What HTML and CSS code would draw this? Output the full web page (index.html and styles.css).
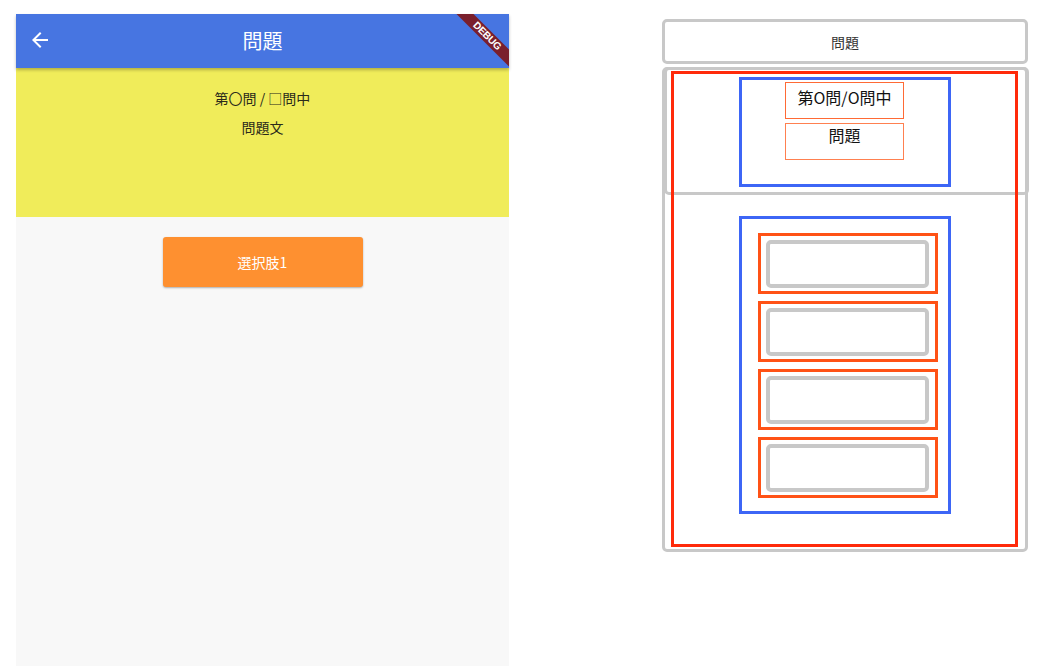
FILE: index.html
```html
<!DOCTYPE html>
<html lang="ja">
<head>
<meta charset="utf-8">
<title>問題</title>
<link rel="stylesheet" href="styles.css">
</head>
<body>
<div class="page">
  <div class="phone">
    <div class="appbar">
      <svg class="back" width="24" height="24" viewBox="0 0 24 24"><path d="M20 11H7.83l5.59-5.59L12 4l-8 8 8 8 1.41-1.41L7.83 13H20v-2z" fill="#fff"/></svg>
      <div class="title">問題</div>
      <div class="debug"><span>DEBUG</span></div>
    </div>
    <div class="question">
      <div class="qline">第〇問 / □問中</div>
      <div class="qline">問題文</div>
    </div>
    <div class="choices">
      <div class="choice">選択肢1</div>
    </div>
  </div>

  <div class="diagram">
    <div class="d-header">問題</div>
    <div class="d-body">
      <div class="d-overlay"></div>
      <div class="d-red">
        <div class="d-blue d-blue-top">
          <div class="d-small d-small-1">第O問/O問中</div>
          <div class="d-small d-small-2">問題</div>
        </div>
        <div class="d-blue d-blue-list">
          <div class="d-item"><div class="d-btn"></div></div>
          <div class="d-item"><div class="d-btn"></div></div>
          <div class="d-item"><div class="d-btn"></div></div>
          <div class="d-item"><div class="d-btn"></div></div>
        </div>
      </div>
    </div>
  </div>
</div>
</body>
</html>
```
FILE: styles.css
```css
html, body {
  margin: 0;
  padding: 0;
  background: #ffffff;
  font-family: "Noto Sans CJK JP", "Noto Sans", Roboto, sans-serif;
}
.page {
  display: flex;
  align-items: flex-start;
  padding: 14px 0 0 16px;
  height: 652px;
  overflow: hidden;
}
.phone {
  width: 493px;
  height: 652px;
  background: #f8f8f8;
  display: flex;
  flex-direction: column;
  flex-shrink: 0;
}
.appbar {
  position: relative;
  height: 54px;
  background: #4775e1;
  display: flex;
  align-items: center;
  box-shadow: 0 2px 3px rgba(0,0,0,0.25);
  z-index: 2;
  overflow: hidden;
}
.back {
  margin-left: 12px;
  margin-top: -3px;
}
.title {
  position: absolute;
  left: 0;
  right: 0;
  top: 12px;
  text-align: center;
  color: #fff;
  font-size: 20px;
  line-height: 30px;
}
.debug {
  position: absolute;
  top: 0;
  right: 0;
  width: 60px;
  height: 60px;
  overflow: hidden;
}
.debug span {
  position: absolute;
  top: 16px;
  right: -23px;
  width: 90px;
  height: 12px;
  background: #7a1f2c;
  color: #fff;
  font-family: "Liberation Sans", sans-serif;
  font-weight: bold;
  font-size: 10px;
  line-height: 12px;
  text-align: center;
  transform: rotate(45deg);
  letter-spacing: -0.2px;
}
.question {
  height: 149px;
  background: #f0ec5a;
  display: flex;
  flex-direction: column;
  align-items: center;
  padding-top: 20px;
  box-sizing: border-box;
  gap: 9px;
}
.qline {
  font-size: 14px;
  line-height: 20px;
  color: #2a2a1a;
}
.choices {
  display: flex;
  flex-direction: column;
  align-items: center;
  padding-top: 20px;
}
.choice {
  width: 200px;
  height: 50px;
  background: #fe9030;
  border-radius: 3px;
  box-shadow: 0 1px 2px rgba(0,0,0,0.3);
  color: #fff;
  font-size: 14px;
  display: flex;
  align-items: center;
  justify-content: center;
}

/* diagram */
.diagram {
  margin-left: 153px;
  margin-top: 5px;
  width: 366px;
  display: flex;
  flex-direction: column;
  gap: 3px;
}
.d-header {
  height: 45px;
  box-sizing: border-box;
  border: 3px solid #c8c8c8;
  border-radius: 5px;
  display: flex;
  align-items: center;
  justify-content: center;
  font-size: 14px;
  color: #333;
}
.d-body {
  position: relative;
  height: 485px;
  box-sizing: border-box;
  border: 3px solid #c8c8c8;
  border-radius: 5px;
  padding: 1px 7px 2px 6px;
}
.d-overlay {
  position: absolute;
  left: -1px;
  top: -3px;
  width: 365px;
  height: 128px;
  box-sizing: border-box;
  border: 3px solid #c8c8c8;
  border-radius: 5px;
  z-index: 1;
}
.d-red {
  position: relative;
  z-index: 2;
  height: 100%;
  box-sizing: border-box;
  border: 3px solid #ff2a0a;
  display: flex;
  flex-direction: column;
  align-items: center;
  padding-top: 3px;
  gap: 29px;
}
.d-blue {
  width: 212px;
  box-sizing: border-box;
  border: 3px solid #3d66f6;
  display: flex;
  flex-direction: column;
  align-items: center;
}
.d-blue-top {
  height: 110px;
  padding-top: 2px;
  gap: 4px;
}
.d-small {
  width: 119px;
  height: 37px;
  box-sizing: border-box;
  border: 1px solid #ff6a35;
  text-align: center;
  font-size: 16px;
  line-height: 20px;
  color: #111;
}
.d-small-1 {
  padding-top: 4px;
}
.d-small-2 {
  padding-top: 1px;
  border-color: #ff8050;
}
.d-blue-list {
  height: 298px;
  padding-top: 14px;
  gap: 7px;
}
.d-item {
  width: 180px;
  height: 61px;
  margin-left: 6px;
  box-sizing: border-box;
  border: 3px solid #ff5216;
  padding: 4px 6px 3px 5px;
}
.d-btn {
  height: 100%;
  box-sizing: border-box;
  border: 4px solid #c8c8c8;
  border-radius: 5px;
}
```
